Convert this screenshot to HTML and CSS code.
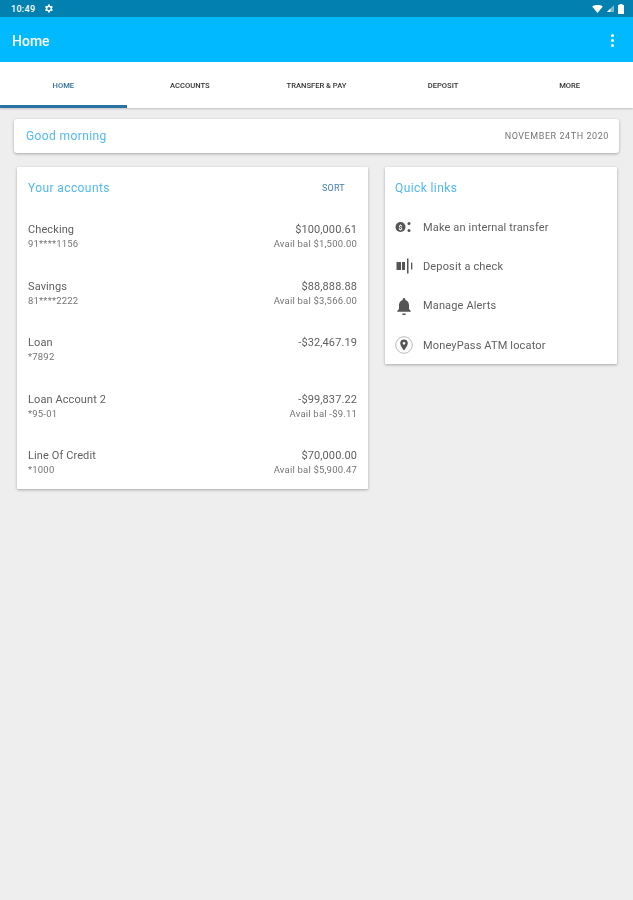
FILE: index.html
```html
<!DOCTYPE html>
<html lang="en">
<head>
<meta charset="utf-8">
<title>Home</title>
<link rel="stylesheet" href="styles.css">
</head>
<body>
<div class="status">
  <span class="time">10:49</span>
  <svg class="gear" viewBox="0 0 24 24" width="11" height="11"><path fill="#fff" d="M19.4 13a7.5 7.5 0 0 0 0-2l2.1-1.6-2-3.5-2.5 1a7.5 7.5 0 0 0-1.7-1L15 3.2h-4l-.4 2.7a7.5 7.5 0 0 0-1.7 1l-2.5-1-2 3.5L6.5 11a7.5 7.5 0 0 0 0 2l-2.1 1.6 2 3.5 2.5-1a7.5 7.5 0 0 0 1.7 1l.4 2.7h4l.4-2.7a7.5 7.5 0 0 0 1.7-1l2.5 1 2-3.5zM13 15.5a3.5 3.5 0 1 1 0-7 3.5 3.5 0 0 1 0 7z"/></svg>
  <span class="status-right">
    <svg viewBox="0 0 12 9" width="11" height="8"><path fill="#fff" d="M0 1.6C3.400-.5 8.600-.5 12 1.600L6 9z"/></svg>
    <svg viewBox="0 0 8 8" width="7" height="7"><path fill="#fff" fill-opacity=".45" d="M8 0v8H0z"/><path fill="#fff" d="M4 4v4H0z"/></svg>
    <svg viewBox="0 0 6 10" width="6" height="10"><path fill="#fff" d="M1.500 0h3v1H6v9H0V1h1.500z"/></svg>
  </span>
</div>
<header class="appbar">
  <span class="appbar-title">Home</span>
  <span class="kebab"><i></i><i></i><i></i></span>
</header>
<nav class="tabs">
  <a class="tab active">HOME</a>
  <a class="tab">ACCOUNTS</a>
  <a class="tab">TRANSFER &amp; PAY</a>
  <a class="tab">DEPOSIT</a>
  <a class="tab">MORE</a>
</nav>
<main class="content">
  <section class="greeting">
    <span class="greet">Good morning</span>
    <span class="date">NOVEMBER 24TH 2020</span>
  </section>
  <div class="columns">
    <section class="card accounts">
      <div class="card-head">
        <h2 class="card-title">Your accounts</h2>
        <span class="sort">SORT</span>
      </div>
      <div class="acct"><div><div class="name">Checking</div><div class="sub">91****1156</div></div><div class="right"><div class="name">$100,000.61</div><div class="sub">Avail bal $1,500.00</div></div></div>
      <div class="acct"><div><div class="name">Savings</div><div class="sub">81****2222</div></div><div class="right"><div class="name">$88,888.88</div><div class="sub">Avail bal $3,566.00</div></div></div>
      <div class="acct"><div><div class="name">Loan</div><div class="sub">*7892</div></div><div class="right"><div class="name">-$32,467.19</div></div></div>
      <div class="acct"><div><div class="name">Loan Account 2</div><div class="sub">*95-01</div></div><div class="right"><div class="name">-$99,837.22</div><div class="sub">Avail bal -$9.11</div></div></div>
      <div class="acct"><div><div class="name">Line Of Credit</div><div class="sub">*1000</div></div><div class="right"><div class="name">$70,000.00</div><div class="sub">Avail bal $5,900.47</div></div></div>
    </section>
    <section class="card links">
      <h2 class="card-title">Quick links</h2>
      <div class="link">
        <svg viewBox="0 0 18 18" width="18" height="18"><circle cx="5.500" cy="9" r="5" fill="#555"/><text x="5.500" y="11.500" class="dollar">$</text><circle cx="14" cy="5.500" r="1.500" fill="#555"/><circle cx="14" cy="12.500" r="1.500" fill="#555"/></svg>
        <span>Make an internal transfer</span>
      </div>
      <div class="link">
        <svg viewBox="0 0 18 18" width="18" height="18"><path fill="#555" d="M1.500 5H6v8H1.500zM7 5h3v8H7z"/><path fill="#555" d="M12 1.500h1.500v15H12zM16 5.500h1.300v7H16z"/></svg>
        <span>Deposit a check</span>
      </div>
      <div class="link">
        <svg viewBox="0 0 18 18" width="18" height="18"><path fill="#555" d="M9 1a1.300 1.300 0 0 1 1.300 1.300v.6c2.400.6 3.700 2.700 3.700 5.100v4l1.800 2v.8H2.200V14L4 12V8c0-2.400 1.300-4.500 3.700-5.100v-.6A1.300 1.300 0 0 1 9 1zM7.200 16.500h3.600a1.800 1.800 0 0 1-3.600 0z"/></svg>
        <span>Manage Alerts</span>
      </div>
      <div class="link">
        <svg viewBox="0 0 18 18" width="18" height="18"><circle cx="9" cy="9" r="8.300" fill="none" stroke="#aaa" stroke-width=".8"/><path fill="#555" fill-rule="evenodd" d="M9 3.500a3.800 3.800 0 0 1 3.800 3.800C12.800 10 9 14.500 9 14.500S5.200 10 5.200 7.300A3.800 3.800 0 0 1 9 3.500zm0 2.400a1.400 1.400 0 1 0 0 2.800 1.400 1.400 0 0 0 0-2.800z"/></svg>
        <span>MoneyPass ATM locator</span>
      </div>
    </section>
  </div>
</main>
</body>
</html>
```
FILE: styles.css
```css
* { box-sizing: border-box; }
html, body { margin: 0; height: 100%; }
body {
  width: 633px;
  height: 900px;
  overflow: hidden;
  background: #eeeeee;
  font-family: Roboto, "Liberation Sans", sans-serif;
  color: #616161;
  filter: blur(0.6px);
}
.status {
  height: 17px;
  background: #0281b1;
  display: flex;
  align-items: center;
  padding: 0 9px 0 11px;
  color: #fff;
}
.time { font-size: 9px; font-weight: 500; letter-spacing: .3px; }
.gear { margin-left: 8px; }
.status-right { margin-left: auto; display: flex; align-items: center; gap: 4px; }
.appbar {
  height: 45px;
  background: #00b9ff;
  display: flex;
  align-items: center;
  justify-content: space-between;
  padding: 2px 19px 0 12px;
  color: #fff;
}
.appbar-title { font-size: 14px; font-weight: 500; }
.kebab { display: flex; flex-direction: column; gap: 2px; }
.kebab i { display: block; width: 3px; height: 3px; border-radius: 50%; background: #fff; }
.tabs {
  height: 46px;
  background: #fff;
  display: flex;
  box-shadow: 0 1px 2px rgba(0,0,0,.2);
  position: relative;
}
.tab {
  flex: 1;
  display: flex;
  align-items: center;
  justify-content: center;
  font-size: 7.600px;
  font-weight: 500;
  color: #333;
  border-bottom: 3px solid transparent;
  padding-top: 3px;
}
.tab.active { color: #2c6f9e; border-bottom-color: #2a73a5; }
.content { padding: 11px 14px 0; }
.greeting {
  height: 34px;
  background: #fff;
  border-radius: 3px;
  box-shadow: 0 1px 3px rgba(0,0,0,.3);
  display: flex;
  align-items: center;
  justify-content: space-between;
  padding: 0 10px 0 12px;
}
.greet { font-size: 12px; color: #4fb9f3; letter-spacing: .4px; }
.date { font-size: 9px; color: #757575; letter-spacing: .57px; }
.columns { display: flex; align-items: flex-start; gap: 17px; margin: 14px 2px 0 3px; }
.card {
  flex: none;
  background: #fff;
  box-shadow: 0 1px 3px rgba(0,0,0,.3);
  border-radius: 1px;
}
.accounts { width: 351px; height: 322px; padding: 13px 11px 0; }
.links { width: 232px; height: 197px; padding: 13px 10px 0; }
.card-head { display: flex; justify-content: space-between; align-items: center; padding-right: 12px; }
.card-title { margin: 0; font-size: 12px; font-weight: 400; color: #4fb9f3; line-height: 16px; letter-spacing: .4px; }
.sort { font-size: 9px; color: #3f7fae; letter-spacing: .25px; }
.acct { display: flex; justify-content: space-between; height: 56.500px; }
.card-head + .acct { margin-top: 27px; }
.right { text-align: right; }
.name { font-size: 11px; line-height: 14px; color: #5f5f5f; letter-spacing: .1px; }
.sub { font-size: 9.500px; line-height: 13px; color: #757575; letter-spacing: .2px; }
.links .card-title { margin-bottom: 11.500px; }
.link { display: flex; align-items: center; gap: 10px; height: 39.300px; font-size: 11px; color: #5f5f5f; letter-spacing: .15px; }
.dollar { font-size: 7px; font-weight: 700; fill: #fff; text-anchor: middle; font-family: Roboto, sans-serif; }
```
